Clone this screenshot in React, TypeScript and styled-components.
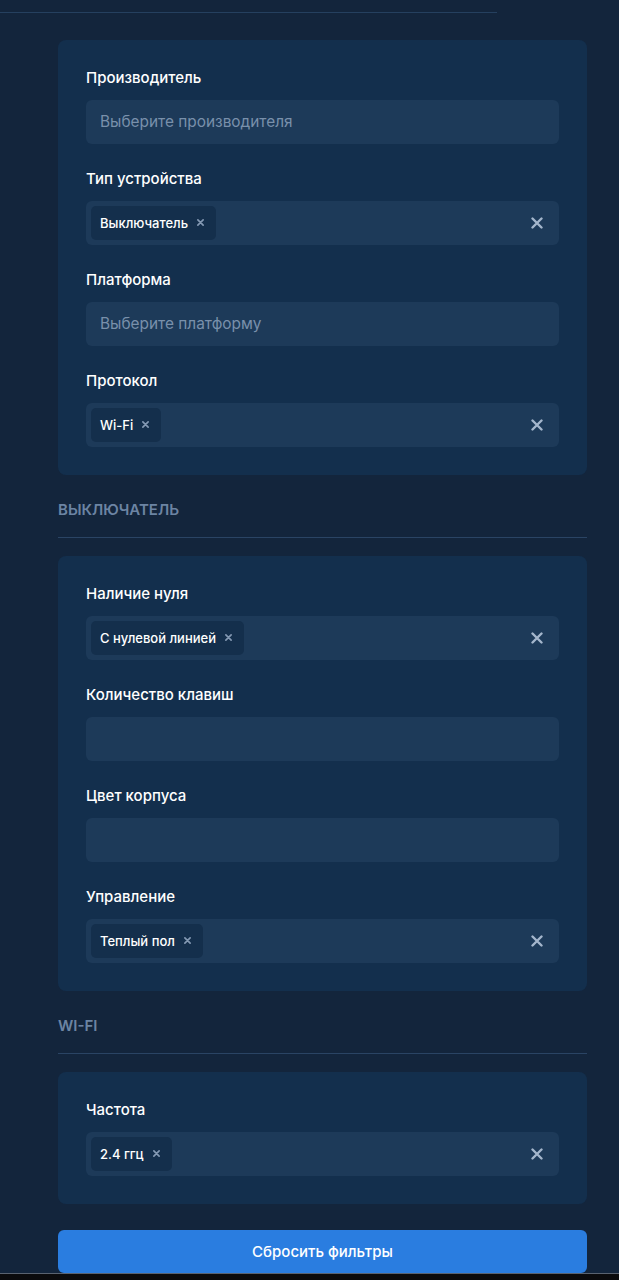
import React from 'react';
import styled, { createGlobalStyle } from 'styled-components';

type Field = {
  label: string;
  placeholder?: string;
  chips?: string[];
};

type Section = {
  title?: string;
  fields: Field[];
};

const sections: Section[] = [
  {
    fields: [
      { label: 'Производитель', placeholder: 'Выберите производителя' },
      { label: 'Тип устройства', chips: ['Выключатель'] },
      { label: 'Платформа', placeholder: 'Выберите платформу' },
      { label: 'Протокол', chips: ['Wi-Fi'] },
    ],
  },
  {
    title: 'Выключатель',
    fields: [
      { label: 'Наличие нуля', chips: ['С нулевой линией'] },
      { label: 'Количество клавиш' },
      { label: 'Цвет корпуса' },
      { label: 'Управление', chips: ['Теплый пол'] },
    ],
  },
  {
    title: 'Wi-Fi',
    fields: [{ label: 'Частота', chips: ['2.4 ггц'] }],
  },
];

const ClearIcon = ({ size = 12, stroke = 2.4 }: { size?: number; stroke?: number }) => (
  <svg width={size} height={size} viewBox="0 0 12 12" fill="none">
    <path d="M1.5 1.5L10.5 10.5M10.5 1.5L1.5 10.5" stroke="currentColor" strokeWidth={stroke} strokeLinecap="round" />
  </svg>
);

const App: React.FC = () => {
  return (
    <>
      <GlobalStyle />
      <Page>
        <TopRule />
        <Content>
          {sections.map((section, i) => (
            <React.Fragment key={i}>
              {section.title && (
                <SectionHeader>
                  <SectionTitle>{section.title}</SectionTitle>
                </SectionHeader>
              )}
              <Card>
                {section.fields.map(field => (
                  <FieldItem key={field.label}>
                    <FieldLabel>{field.label}</FieldLabel>
                    <SelectBox>
                      {field.chips ? (
                        <>
                          <ChipList>
                            {field.chips.map(chip => (
                              <Chip key={chip}>
                                {chip}
                                <ChipRemove>
                                  <ClearIcon size={7} stroke={2.8} />
                                </ChipRemove>
                              </Chip>
                            ))}
                          </ChipList>
                          <ClearButton>
                            <ClearIcon />
                          </ClearButton>
                        </>
                      ) : (
                        <Placeholder>{field.placeholder}</Placeholder>
                      )}
                    </SelectBox>
                  </FieldItem>
                ))}
              </Card>
            </React.Fragment>
          ))}
          <ResetButton>Сбросить фильтры</ResetButton>
        </Content>
        <BottomBar />
      </Page>
    </>
  );
};

export default App;

const GlobalStyle = createGlobalStyle`
  html, body {
    margin: 0;
    padding: 0;
    background: #13253c;
  }
  body {
    font-family: Inter, "Liberation Sans", "Noto Sans", sans-serif;
    -webkit-font-smoothing: antialiased;
  }
`;

const Page = styled.div`
  width: 619px;
  height: 1280px;
  background: #13253c;
  overflow: hidden;
  display: flex;
  flex-direction: column;
`;

const TopRule = styled.div`
  margin-top: 12px;
  width: 497px;
  height: 1px;
  background: #25405f;
`;

const Content = styled.div`
  padding: 27px 32px 0 58px;
  display: flex;
  flex-direction: column;
  flex: 1;
`;

const Card = styled.div`
  background: #132f4d;
  border-radius: 8px;
  padding: 27px 28px 28px;
  display: flex;
  flex-direction: column;
  gap: 24px;
`;

const SectionHeader = styled.div`
  margin-top: 24px;
  padding-bottom: 16px;
  border-bottom: 1px solid #2a4464;
  margin-bottom: 18px;
`;

const SectionTitle = styled.div`
  color: #6c84a3;
  font-size: 15px;
  font-weight: 600;
  text-transform: uppercase;
  line-height: 22px;
`;

const FieldItem = styled.div`
  display: flex;
  flex-direction: column;
  gap: 11px;
`;

const FieldLabel = styled.label`
  color: #ffffff;
  font-size: 15px;
  font-weight: 500;
  line-height: 22px;
`;

const SelectBox = styled.div`
  height: 44px;
  box-sizing: border-box;
  background: #1d3a59;
  border-radius: 6px;
  display: flex;
  align-items: center;
  padding: 0 14px 0 5px;
`;

const Placeholder = styled.span`
  padding-left: 9px;
  color: #7990ab;
  font-size: 15.4px;
`;

const ChipList = styled.div`
  display: flex;
  gap: 6px;
  flex: 1;
`;

const Chip = styled.span`
  display: inline-flex;
  align-items: center;
  gap: 9px;
  height: 34px;
  padding: 0 12px 0 9px;
  border-radius: 5px;
  background: #142f4c;
  color: #ffffff;
  font-size: 13px;
  font-weight: 500;
`;

const ChipRemove = styled.span`
  display: inline-flex;
  color: #8499b3;
`;

const ClearButton = styled.span`
  display: inline-flex;
  color: #a4b6cc;
  margin-right: 2px;
`;

const ResetButton = styled.button`
  margin-top: 26px;
  height: 43px;
  border: none;
  border-radius: 6px;
  background: #2a7de0;
  color: #ffffff;
  font-family: inherit;
  font-size: 15px;
  font-weight: 500;
`;

const BottomBar = styled.div`
  height: 7px;
  background: #0b0b0d;
  border-top: 1px solid #5a6370;
`;
